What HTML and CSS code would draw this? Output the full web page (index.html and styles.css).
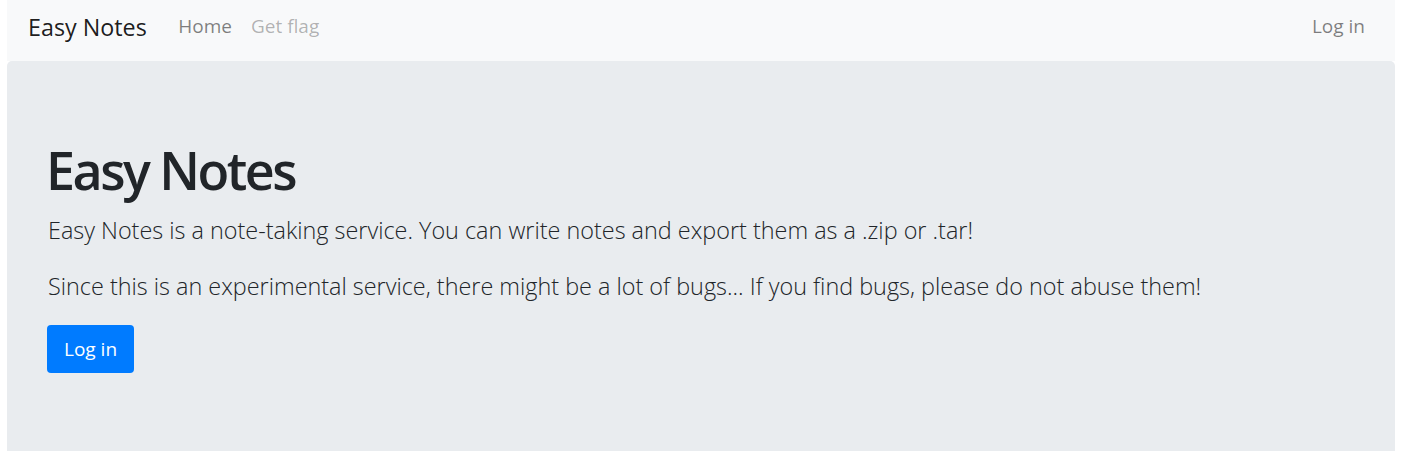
FILE: index.html
```html
<!DOCTYPE html>
<html>
<head>
<meta charset="utf-8">
<title>Easy Notes</title>
<link rel="stylesheet" href="styles.css">
</head>
<body>
<div class="page">
  <nav class="navbar">
    <a class="brand" href="#">Easy Notes</a>
    <ul class="nav">
      <li><a class="nav-link" href="#">Home</a></li>
      <li><a class="nav-link disabled" href="#">Get flag</a></li>
    </ul>
    <ul class="nav nav-right">
      <li><a class="nav-link" href="#">Log in</a></li>
    </ul>
  </nav>
  <main class="jumbotron">
    <h1 class="title">Easy Notes</h1>
    <p class="lead">Easy Notes is a note-taking service. You can write notes and export them as a .zip or .tar!</p>
    <p class="lead">Since this is an experimental service, there might be a lot of bugs... If you find bugs, please do not abuse them!</p>
    <a class="btn" href="#">Log in</a>
  </main>
</div>
</body>
</html>
```
FILE: styles.css
```css
html, body {
  margin: 0;
  padding: 0;
  background: #fff;
}
body {
  font-family: "Open Sans", "Noto Sans", sans-serif;
  color: #212529;
  overflow: hidden;
}
.page {
  width: 1388px;
  margin-left: 7px;
}
a { text-decoration: none; }
.navbar {
  display: flex;
  align-items: flex-start;
  height: 61px;
  background: #f8f9fa;
  padding: 0 20.5px 0 21px;
  box-sizing: border-box;
}
.brand {
  font-size: 23.3px;
  line-height: 35px;
  color: rgba(0,0,0,.9);
  margin-top: 10px;
  margin-right: 22px;
}
.nav {
  display: flex;
  list-style: none;
  margin: 4px 0 0;
  padding: 0;
}
.nav-right { margin-left: auto; }
.nav-link {
  display: block;
  padding: 8px 9.5px;
  font-size: 19px;
  line-height: 28.5px;
  color: rgba(0,0,0,.5);
}
.nav-link.disabled { color: rgba(0,0,0,.3); }
.jumbotron {
  background: #e9ecef;
  border-radius: 5px 5px 0 0;
  padding: 78px 40px 90px 41px;
}
.title {
  margin: 0 0 12px -2px;
  font-size: 52px;
  font-weight: 600;
  line-height: 62.4px;
  letter-spacing: -2.5px;
}
.lead {
  margin: 0 0 20.5px;
  font-size: 23.4px;
  font-weight: 300;
  line-height: 35.1px;
}
.btn {
  display: inline-block;
  margin-left: -1px;
  background: #007bff;
  color: #fff;
  font-size: 19px;
  line-height: 30px;
  padding: 9px 17px;
  border-radius: 4px;
}
```
